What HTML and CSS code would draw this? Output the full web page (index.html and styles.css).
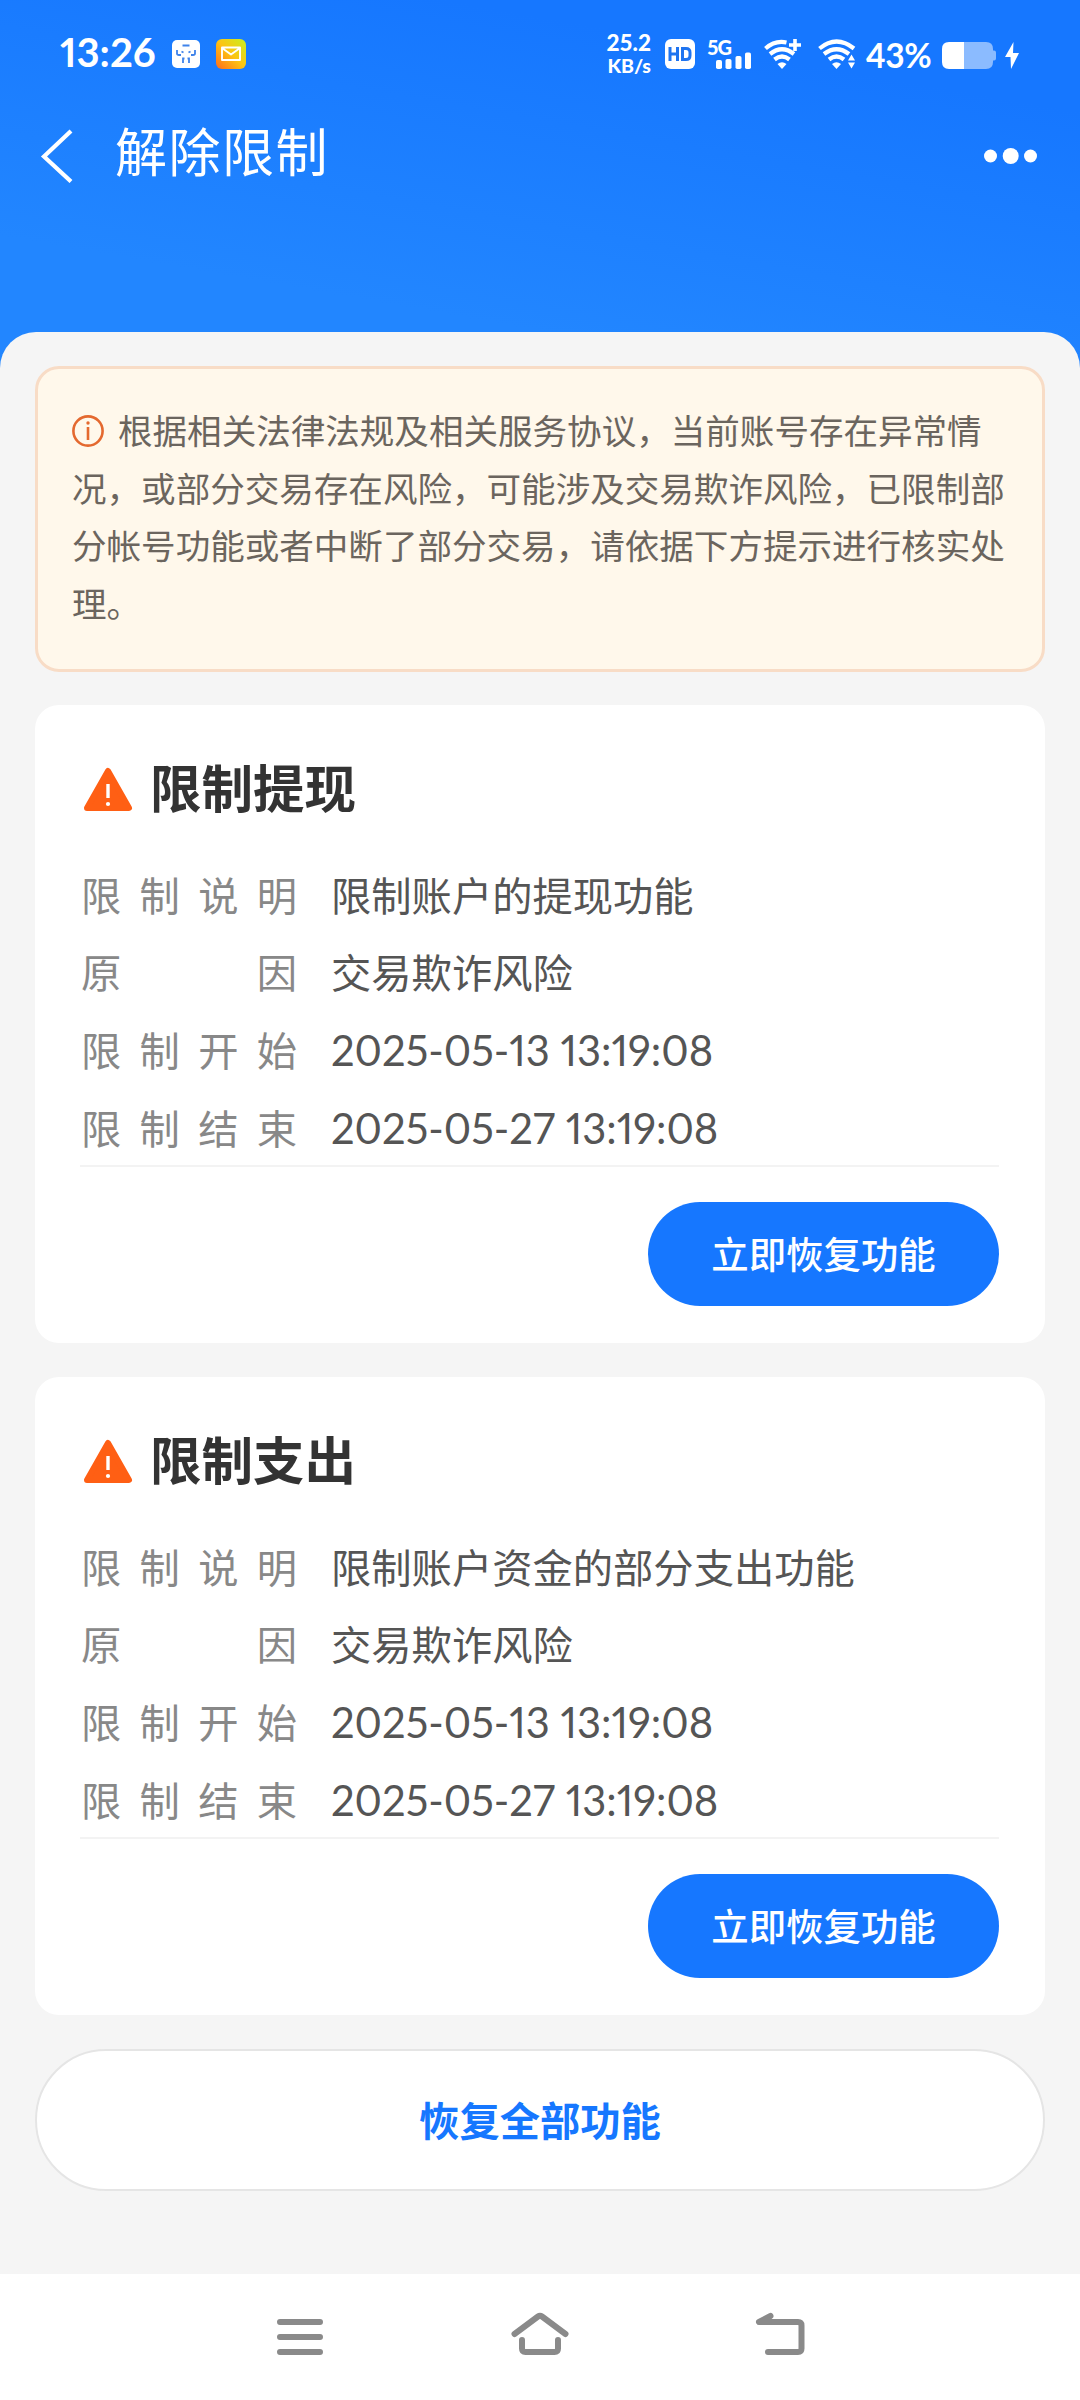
FILE: index.html
```html
<!DOCTYPE html>
<html lang="zh-CN">
<head>
<meta charset="utf-8">
<title>解除限制</title>
<link rel="stylesheet" href="styles.css">
</head>
<body>
<div class="screen">
  <header class="hero">
    <div class="statusbar">
      <span class="clock">13:26</span>
      <svg class="app-icon" width="28" height="28" viewBox="0 0 28 28">
        <rect width="28" height="28" rx="5" fill="#fff"/>
        <path d="M10.500 5.500h7M5 10v3.500q0 1.500 2 1.500h2M23 10v3.500q0 1.500-2 1.500h-2M11 23v-4.500h1.500M15.500 18.500H17V23" fill="none" stroke="#3f83ea" stroke-width="1.800"/>
        <path d="M9.500 11.500l2 1M18.500 11.500l-2 1" stroke="#3f83ea" stroke-width="1.800"/>
      </svg>
      <svg class="mail-icon" width="30" height="30" viewBox="0 0 30 30">
        <defs><linearGradient id="mail" x1="0" y1="1" x2="1" y2="0"><stop offset="0" stop-color="#ff6a1a"/><stop offset=".5" stop-color="#fdc413"/><stop offset="1" stop-color="#c8f020"/></linearGradient></defs>
        <rect width="30" height="30" rx="6" fill="url(#mail)"/>
        <path d="M6 8.500h18v12.500H6zM6 9l9 6.500L24 9" fill="none" stroke="#fff" stroke-width="1.900" stroke-linejoin="round"/>
      </svg>
      <span class="spacer"></span>
      <span class="speed"><span>25.2</span><span>KB/s</span></span>
      <svg class="hd" width="30" height="30" viewBox="0 0 30 30">
        <rect width="30" height="30" rx="6" fill="#fff"/>
        <path d="M5 8v14M12.500 8v14M5 15h7.500M17.500 9.500H21q4 0 4 4v3q0 4-4 4h-3.500z" fill="none" stroke="#1f74f0" stroke-width="3"/>
      </svg>
      <span class="signal"><span class="signal-type">5G</span>
        <svg width="44" height="30" viewBox="0 0 44 30" fill="#fff"><rect x="9" y="21" width="6" height="9" rx="1.800"/><rect x="18.500" y="20" width="6" height="10" rx="1.800"/><rect x="28.500" y="17" width="6" height="13" rx="1.800"/><rect x="38" y="13.500" width="6" height="16.500" rx="1.800"/></svg>
      </span>
      <svg class="wifi-plus" width="37" height="30" viewBox="0 0 37 30">
        <path d="M1.500 9.500Q11 1 22.500 3.500M6 15q12-9.500 24 0M10.500 20.500q7.500-6 15 0" fill="none" stroke="#fff" stroke-width="4.200"/>
        <path d="M13.500 25q4.500-3.500 9 0L18 30z" fill="#fff"/>
        <path d="M31 0v12M25 6h12" stroke="#fff" stroke-width="3.600"/>
      </svg>
      <svg class="wifi" width="38" height="30" viewBox="0 0 38 30">
        <path d="M1.500 9.500q17-14 34.500 0M6 15q12.500-9.500 25 0M11 20.500q7.500-6 15 0" fill="none" stroke="#fff" stroke-width="4.200"/>
        <path d="M14 25q4.500-3.500 9 0L18.500 30z" fill="#fff"/>
        <path d="M33.500 15.500l3.500 6h-7zM33.500 29.500l3.500-6h-7z" fill="#fff"/>
      </svg>
      <span class="percent">43%</span>
      <svg class="battery" width="54" height="27" viewBox="0 0 54 27">
        <path d="M22 0h22q7 0 7 7v1.500h1q2 0 2 2v6q0 2-2 2h-1V20q0 7-7 7H22z" fill="#8bbbff"/>
        <path d="M22 0H7Q0 0 0 7v13q0 7 7 7h15z" fill="#fff"/>
      </svg>
      <svg class="bolt" width="14" height="27" viewBox="0 0 14 27"><path d="M8.500 0L0 15h5.500L6 27l8-16H8z" fill="#fff"/></svg>
    </div>
    <div class="titlebar">
      <svg class="back" width="34" height="54" viewBox="0 0 34 54"><path d="M31 2L4 27.500 31 52.500" fill="none" stroke="#fff" stroke-width="4.200"/></svg>
      <h1>解除限制</h1>
      <svg class="more" width="54" height="16" viewBox="0 0 54 16" fill="#fff"><circle cx="6.500" cy="8" r="6.500"/><circle cx="26.700" cy="8" r="8"/><circle cx="46.500" cy="8" r="6.500"/></svg>
    </div>
  </header>

  <main class="sheet">
    <section class="notice">
      <p><svg class="info" width="32" height="32" viewBox="0 0 32 32"><circle cx="16" cy="16" r="14.600" fill="none" stroke="#e4692f" stroke-width="2.600"/><path d="M16 12V25" stroke="#e4692f" stroke-width="2.600"/><circle cx="16" cy="8" r="1.700" fill="#e4692f"/></svg>根据相关法律法规及相关服务协议，当前账号存在异常情<br>况，或部分交易存在风险，可能涉及交易欺诈风险，已限制部<br>分帐号功能或者中断了部分交易，请依据下方提示进行核实处<br>理。</p>
    </section>

    <section class="card">
      <h2><svg class="warn" width="50" height="46" viewBox="0 0 50 46"><path d="M25 5L46 42H4z" fill="#ff5f14" stroke="#ff5f14" stroke-width="6" stroke-linejoin="round"/><path d="M25 18v14" stroke="#fff" stroke-width="3.400"/><circle cx="25" cy="38" r="2.100" fill="#fff"/></svg><span>限制提现</span></h2>
      <dl>
        <div class="row"><dt>限制说明</dt><dd>限制账户的提现功能</dd></div>
        <div class="row"><dt>原因</dt><dd>交易欺诈风险</dd></div>
        <div class="row"><dt>限制开始</dt><dd class="date">2025-05-13 13:19:08</dd></div>
        <div class="row"><dt>限制结束</dt><dd class="date">2025-05-27 13:19:08</dd></div>
      </dl>
      <div class="actions"><button class="restore">立即恢复功能</button></div>
    </section>

    <section class="card">
      <h2><svg class="warn" width="50" height="46" viewBox="0 0 50 46"><path d="M25 5L46 42H4z" fill="#ff5f14" stroke="#ff5f14" stroke-width="6" stroke-linejoin="round"/><path d="M25 18v14" stroke="#fff" stroke-width="3.400"/><circle cx="25" cy="38" r="2.100" fill="#fff"/></svg><span>限制支出</span></h2>
      <dl>
        <div class="row"><dt>限制说明</dt><dd>限制账户资金的部分支出功能</dd></div>
        <div class="row"><dt>原因</dt><dd>交易欺诈风险</dd></div>
        <div class="row"><dt>限制开始</dt><dd class="date">2025-05-13 13:19:08</dd></div>
        <div class="row"><dt>限制结束</dt><dd class="date">2025-05-27 13:19:08</dd></div>
      </dl>
      <div class="actions"><button class="restore">立即恢复功能</button></div>
    </section>

    <button class="restore-all">恢复全部功能</button>
  </main>

  <nav class="navbar">
    <svg width="60" height="50" viewBox="0 0 60 50"><path d="M10 12h40M10 27h40M10 42h40"/></svg>
    <svg width="60" height="50" viewBox="0 0 60 50"><path d="M4.500 24L28 6.500q2-1.500 4 0L55.500 24M12 30v8.500q0 3.500 3.500 3.500h29q3.500 0 3.500-3.500V30"/></svg>
    <svg width="60" height="50" viewBox="0 0 60 50"><path d="M20.500 6L9 12h39q3.500 0 3.500 3.500v23q0 3.500-3.500 3.500H18"/></svg>
  </nav>
</div>
</body>
</html>
```
FILE: styles.css
```css
* { box-sizing: border-box; margin: 0; padding: 0; }
body { font-family: "Noto Sans CJK SC", sans-serif; background: #f5f5f5; }
svg { display: block; flex: none; }
button { font-family: inherit; border: 0; }

.screen { display: flex; flex-direction: column; width: 1080px; height: 2400px; overflow: hidden; background: linear-gradient(190deg, #1677ff 0, #1677ff 110px, #2286ff 420px) #1677ff; }

.hero { flex: none; height: 332px; color: #fff; }
.statusbar { display: flex; align-items: center; height: 108px; padding: 0 61px 0 60px; font-family: Lato, sans-serif; }
.clock { width: 96px; font-size: 40px; font-weight: 700; line-height: 48px; margin-top: -5px; white-space: nowrap; font-feature-settings: "pnum"; }
.app-icon { margin-left: 16px; }
.mail-icon { margin-left: 16px; }
.spacer { flex: 1; }
.speed { display: flex; flex-direction: column; align-items: flex-end; font-size: 22.500px; font-weight: 900; line-height: 23px; width: 50px; margin-right: 14px; margin-top: -1px; }
.speed span + span { font-size: 19.500px; }
.hd { margin-right: 12px; }
.signal { display: grid; width: 44px; height: 30px; margin-right: 13px; }
.signal > * { grid-area: 1 / 1; }
.signal-type { font-size: 20px; line-height: 16px; font-weight: 900; letter-spacing: -1px; }
.wifi-plus { margin-right: 17px; }
.wifi { margin-right: 10px; }
.percent { width: 68px; font-size: 33.500px; font-weight: 700; line-height: 40px; white-space: nowrap; margin-right: 8px; margin-top: 2px; letter-spacing: -.3px; }
.battery { margin-right: 9px; margin-top: 3px; }
.bolt { margin-top: 3px; }

.titlebar { display: flex; align-items: center; height: 96px; padding: 0 42px 0 40px; }
.titlebar h1 { flex: 1; margin-left: 41px; margin-top: -12px; font-size: 52px; letter-spacing: 1.500px; font-weight: 400; line-height: 60px; }

.sheet { flex: 1; background: #f5f5f5; border-radius: 36px 36px 0 0; padding: 34px 35px 0; }
.notice { height: 306px; padding: 32px 34px; border: 3px solid #f8dcc6; border-radius: 24px; background: #fff8eb; }
.notice p { font-size: 34.560px; line-height: 57.600px; color: #6b655e; white-space: nowrap; }
.info { display: inline-block; vertical-align: -3px; margin-right: 14px; }

.card { height: 638px; margin-top: 33px; padding: 45px 46px 40px 45px; border-radius: 24px; background: #fff; }
.card + .card { margin-top: 34px; }
.card h2 { display: flex; align-items: center; gap: 17px; height: 78px; font-size: 51.500px; font-weight: 700; color: #333; line-height: 74px; }
.card h2 span { padding-bottom: 6px; }
.warn { margin-left: 3px; margin-bottom: 1px; }
.card dl { margin-top: 27px; border-bottom: 2px solid #f3f3f3; }
.row { display: flex; height: 77.600px; align-items: center; font-size: 40.300px; line-height: 60px; }
dt { width: 216px; margin-left: 1px; color: #888; text-align: justify; text-align-last: justify; text-justify: inter-character; }
dd { margin-left: 34px; color: #555; white-space: nowrap; }
.date { padding-top: 3px; font-family: Lato, sans-serif; font-size: 41.700px; font-feature-settings: "pnum"; }
.actions { display: flex; justify-content: flex-end; padding-top: 35px; }
.restore { width: 351px; height: 104px; padding-bottom: 3px; border-radius: 52px; background: #1677ff; color: #fff; font-size: 37.400px; font-weight: 500; }
.restore-all { display: block; width: 1010px; height: 142px; margin-top: 34px; padding-bottom: 3px; border: 2px solid #e5e5e5; border-radius: 71px; background: #fff; color: #1677ff; font-size: 40.300px; font-weight: 700; }

.navbar { display: flex; flex: none; justify-content: center; gap: 180px; height: 126px; padding-top: 36px; background: #fff; }
.navbar path { fill: none; stroke: #8a8a8a; stroke-width: 6; stroke-linecap: round; stroke-linejoin: round; }
```
